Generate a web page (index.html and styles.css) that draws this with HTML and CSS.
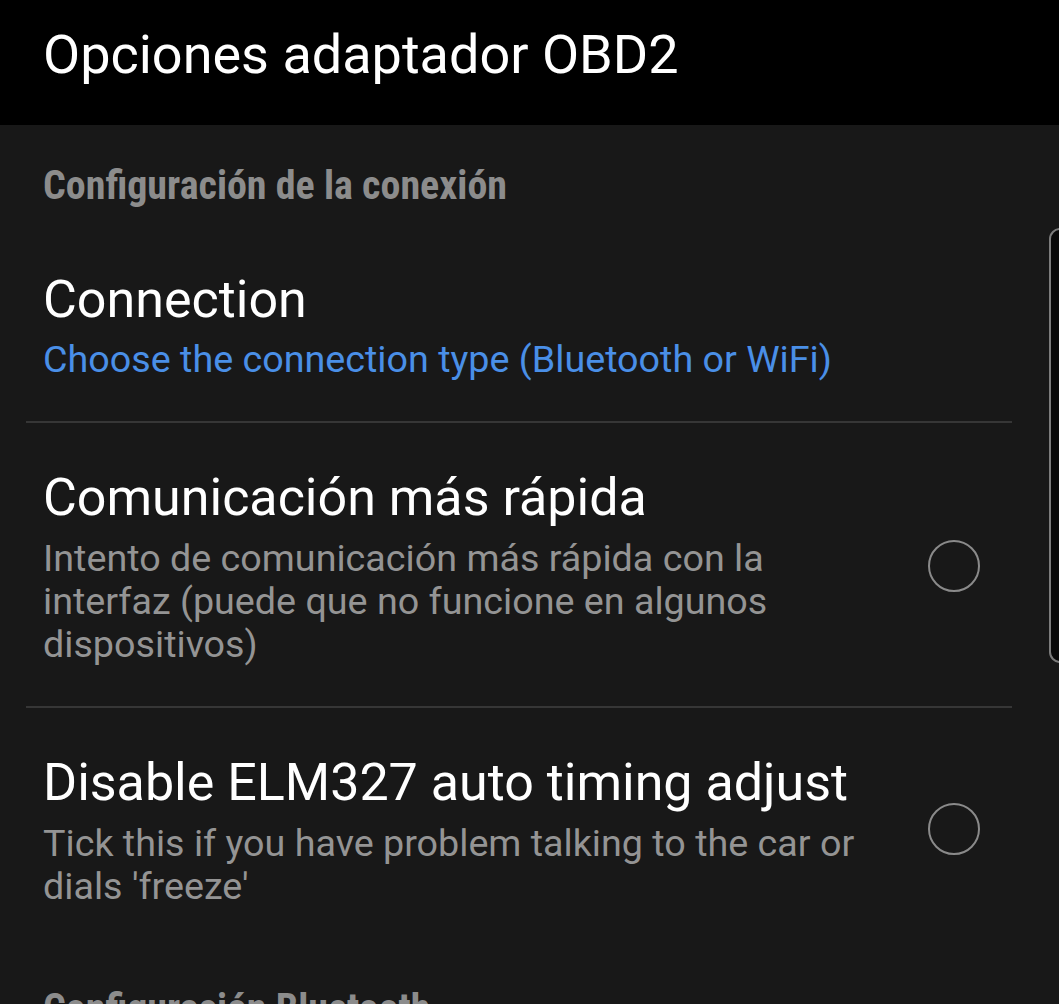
FILE: index.html
```html
<!DOCTYPE html>
<html lang="es">
<head>
    <meta charset="UTF-8">
    <meta name="viewport" content="width=device-width, initial-scale=1.0">
    <title>Opciones adaptador OBD2</title>
    <link rel="stylesheet" href="styles.css">
</head>
<body>
    <header class="toolbar">
        <h1>Opciones adaptador OBD2</h1>
    </header>

    <main class="prefs">
        <h2 class="category">Configuración de la conexión</h2>
        <ul class="pref-list">
            <li class="pref">
                <div class="pref-text">
                    <div class="pref-title">Connection</div>
                    <div class="pref-summary link">Choose the connection type (Bluetooth or WiFi)</div>
                </div>
            </li>
            <li class="pref">
                <div class="pref-text">
                    <div class="pref-title">Comunicación más rápida</div>
                    <div class="pref-summary">Intento de comunicación más rápida con la interfaz (puede que no funcione en algunos dispositivos)</div>
                </div>
                <span class="radio"></span>
            </li>
            <li class="pref">
                <div class="pref-text">
                    <div class="pref-title">Disable ELM327 auto timing adjust</div>
                    <div class="pref-summary">Tick this if you have problem talking to the car or dials 'freeze'</div>
                </div>
                <span class="radio"></span>
            </li>
        </ul>

        <h2 class="category">Configuración Bluetooth</h2>

        <div class="scrollbar"></div>
    </main>
</body>
</html>
```

FILE: styles.css
```css
html, body {
    margin: 0;
    height: 1004px;
    overflow: hidden;
}
body {
    background-color: #181818;
    color: #ffffff;
    font-family: Roboto, 'Noto Sans', sans-serif;
}
.toolbar {
    background-color: #000000;
    height: 125px;
    box-sizing: border-box;
    padding: 28px 0 0 43px;
}
.toolbar h1 {
    margin: 0;
    font-size: 54px;
    font-weight: 400;
    line-height: 54px;
    color: #ffffff;
}
.prefs {
    position: relative;
}
.category {
    margin: 0;
    padding: 37px 0 0 43px;
    font-family: 'Roboto Condensed', 'Liberation Sans Narrow', Roboto, sans-serif;
    font-size: 40px;
    line-height: 48px;
    font-weight: 700;
    color: #8c8c8c;
}
.pref-list {
    list-style: none;
    margin: 0 47px 0 26px;
    padding: 0;
}
.pref {
    display: flex;
    align-items: center;
    padding: 46px 32px 40px 17px;
    border-bottom: 2px solid #363636;
}
.pref:first-child {
    padding-top: 61px;
}
.pref:last-child {
    border-bottom: none;
}
.pref-text {
    flex: 1;
    min-width: 0;
}
.pref-title {
    font-size: 52px;
    line-height: 58px;
    color: #ffffff;
}
.pref-summary {
    margin-top: 10px;
    font-size: 37.7px;
    line-height: 43px;
    color: #949494;
}
.pref-summary.link {
    margin-top: 9px;
    color: #4a8fe7;
}
.radio {
    flex: none;
    width: 52px;
    height: 52px;
    margin: -4px 0 0 50px;
    box-sizing: border-box;
    border: 2px solid #8a8a8a;
    border-radius: 50%;
}
.scrollbar {
    position: absolute;
    top: 103px;
    right: -12px;
    width: 22px;
    height: 435px;
    box-sizing: border-box;
    background-color: #0a0a0a;
    border: 2px solid #7c7c7c;
    border-radius: 12px;
}
```
